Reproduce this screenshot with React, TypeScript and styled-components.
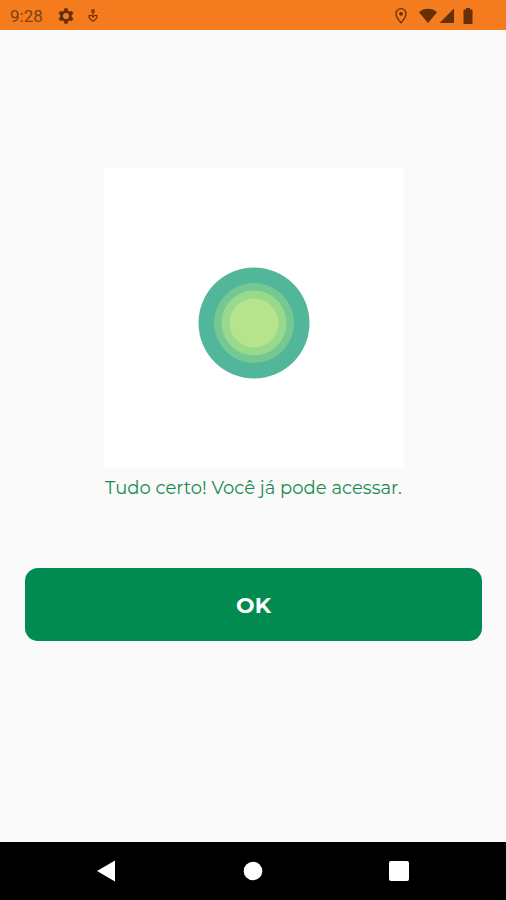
import React from "react";
import styled, { createGlobalStyle } from "styled-components";

const GlobalStyle = createGlobalStyle`
  *, *::before, *::after { box-sizing: border-box; }
  body {
    margin: 0;
    background: #fafafa;
    font-family: Montserrat, Inter, "Open Sans", sans-serif;
  }
`;

const Screen = styled.div`
  display: flex;
  flex-direction: column;
  min-height: 100vh;
`;

const StatusBar = styled.header`
  display: flex;
  align-items: center;
  justify-content: space-between;
  height: 30px;
  padding: 1px 33px 0 10px;
  background: #f57b1f;
  color: #662f06;
`;

const StatusGroup = styled.div<{ $gap: number }>`
  display: flex;
  align-items: center;
  gap: ${({ $gap }) => $gap}px;

  svg { display: block; }
`;

const Clock = styled.time`
  color: #80400f;
  font: 400 17px/20px Roboto, sans-serif;
`;

const Content = styled.main`
  flex: 1;
  display: flex;
  flex-direction: column;
  align-items: center;
  padding: 138px 24px 24px 25px;
`;

const Illustration = styled.div`
  display: grid;
  place-items: center;
  width: 300px;
  max-width: 100%;
  aspect-ratio: 1;
  padding-top: 10px;
  background: #fff;
`;

const Message = styled.p`
  margin: 8px 0 68px;
  color: #1a8a52;
  font-size: 18px;
  font-weight: 400;
  line-height: 24px;
  text-align: center;
`;

const PrimaryButton = styled.button`
  width: 100%;
  height: 73px;
  padding: 2px 0 0;
  border: 0;
  border-radius: 13px;
  background: #028b50;
  color: #fff;
  font: inherit;
  font-size: 22px;
  font-weight: 700;
  line-height: 28px;
  cursor: pointer;
`;

const NavBar = styled.nav`
  display: flex;
  align-items: center;
  justify-content: space-between;
  height: 58px;
  padding: 0 19%;
  background: #000;
`;

const NavButton = styled.button`
  padding: 0;
  border: 0;
  background: none;
  color: #fff;
  cursor: pointer;

  svg { display: block; }
`;

const GearIcon = () => (
  <svg width="18" height="18" viewBox="-12 -12 24 24" fill="none" stroke="currentColor" aria-hidden="true">
    <circle r="5.900" strokeWidth="3.600" />
    {[0, 60, 120].map((angle) => (
      <path
        key={angle}
        transform={`rotate(${angle})`}
        d="M-2-10.200h4l1 4h-6zM-2 10.200h4l1-4h-6z"
        fill="currentColor"
        stroke="none"
      />
    ))}
  </svg>
);

const HeartFigureIcon = () => (
  <svg width="12" height="16" viewBox="0 0 12 16" fill="none" stroke="currentColor" aria-hidden="true">
    <circle cx="6" cy="3" r="1.300" strokeWidth="1.200" />
    <path d="M6 4.500v4" strokeWidth="1.100" />
    <path d="M2 7.800c1.300-.9 3-.3 4 1.200 1-1.500 2.700-2.100 4-1.200.7 2-1.500 3.800-4 5.500-2.500-1.700-4.700-3.500-4-5.500z" strokeWidth="1.200" />
  </svg>
);

const PinIcon = () => (
  <svg width="14" height="18" viewBox="0 0 14 18" fill="none" stroke="currentColor" aria-hidden="true">
    <path d="M7 1.700a5 5 0 0 0-5 5c0 3.500 5 9 5 9s5-5.500 5-9a5 5 0 0 0-5-5z" strokeWidth="1.300" />
    <circle cx="7" cy="6.800" r="1.900" fill="currentColor" stroke="none" />
  </svg>
);

const WifiIcon = () => (
  <svg width="18" height="16" viewBox="0 0 18 16" fill="currentColor" aria-hidden="true">
    <path d="M0 4.200C5-.3 13-.3 18 4.200L9 15z" />
  </svg>
);

const SignalIcon = () => (
  <svg width="16" height="16" viewBox="0 0 16 16" fill="currentColor" aria-hidden="true">
    <path d="M15 .5V15H.5z" />
  </svg>
);

const BatteryIcon = () => (
  <svg width="10" height="16" viewBox="0 0 10 16" fill="currentColor" aria-hidden="true">
    <path d="M3 0h4v1.500h1.500a1 1 0 0 1 1 1V15a1 1 0 0 1-1 1h-7a1 1 0 0 1-1-1V2.500a1 1 0 0 1 1-1H3z" />
  </svg>
);

const rings = [
  { radius: 55.5, color: "#52b69a" },
  { radius: 40, color: "#76c893" },
  { radius: 32.5, color: "#99d98c" },
  { radius: 24.5, color: "#b5e48c" },
];

const PulseRings = () => (
  <svg width="112" height="112" viewBox="-56 -56 112 112" aria-hidden="true">
    {rings.map(({ radius, color }) => (
      <circle key={color} r={radius} fill={color} />
    ))}
  </svg>
);

export default function App() {
  return (
    <>
      <GlobalStyle />
      <Screen>
        <StatusBar>
          <StatusGroup $gap={12}>
            <StatusGroup $gap={14}>
              <Clock>9:28</Clock>
              <GearIcon />
            </StatusGroup>
            <HeartFigureIcon />
          </StatusGroup>
          <StatusGroup $gap={2}>
            <StatusGroup $gap={11}>
              <PinIcon />
              <WifiIcon />
            </StatusGroup>
            <StatusGroup $gap={8}>
              <SignalIcon />
              <BatteryIcon />
            </StatusGroup>
          </StatusGroup>
        </StatusBar>
        <Content>
          <Illustration>
            <PulseRings />
          </Illustration>
          <Message>Tudo certo! Você já pode acessar.</Message>
          <PrimaryButton type="button">OK</PrimaryButton>
        </Content>
        <NavBar>
          <NavButton type="button" aria-label="Voltar">
            <svg width="22" height="24" viewBox="0 0 22 24" fill="currentColor">
              <path d="M19 1.500v21L1 12z" />
            </svg>
          </NavButton>
          <NavButton type="button" aria-label="Início">
            <svg width="22" height="24" viewBox="0 0 22 24" fill="currentColor">
              <circle cx="11" cy="12" r="9.300" />
            </svg>
          </NavButton>
          <NavButton type="button" aria-label="Recentes">
            <svg width="22" height="24" viewBox="0 0 22 24" fill="currentColor">
              <rect x="1" y="2" width="20" height="20" rx="2" />
            </svg>
          </NavButton>
        </NavBar>
      </Screen>
    </>
  );
}
